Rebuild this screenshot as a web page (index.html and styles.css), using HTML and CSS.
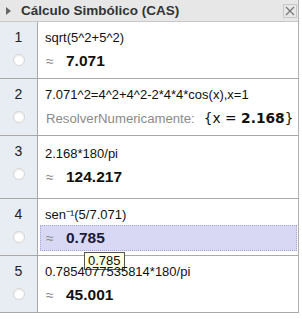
FILE: index.html
```html
<!DOCTYPE html>
<html lang="es">
<head>
<meta charset="UTF-8">
<title>Cálculo Simbólico (CAS)</title>
<link rel="stylesheet" href="styles.css">
</head>
<body>

<div class="panel">
    <!-- Barra de título -->
    <div class="titulo">
        <span class="flecha"></span>
        <span class="texto-titulo">Cálculo Simbólico (CAS)</span>
        <span class="cerrar">
            <svg width="14" height="14" viewBox="0 0 14 14">
                <rect x="0.5" y="0.5" width="13" height="13" fill="none" stroke="#c8c8c8"/>
                <path d="M3 3 L11 11 M11 3 L3 11" stroke="#777" stroke-width="1.2"/>
            </svg>
        </span>
    </div>

    <!-- Filas -->
    <div class="fila">
        <div class="numero"><span>1</span><span class="punto"></span></div>
        <div class="celda">
            <div class="entrada">sqrt(5^2+5^2)</div>
            <div class="salida"><span class="aprox">≈</span><b>7.071</b></div>
        </div>
    </div>

    <div class="fila">
        <div class="numero"><span>2</span><span class="punto"></span></div>
        <div class="celda">
            <div class="entrada">7.071^2=4^2+4^2-2*4*4*cos(x),x=1</div>
            <div class="salida">
                <span class="comando">ResolverNumericamente:</span>
                <span class="solucion">{x = <b>2.168</b>}</span>
            </div>
        </div>
    </div>

    <div class="fila alta">
        <div class="numero"><span>3</span><span class="punto"></span></div>
        <div class="celda">
            <div class="entrada">2.168*180/pi</div>
            <div class="salida"><span class="aprox">≈</span><b>124.217</b></div>
        </div>
    </div>

    <div class="fila">
        <div class="numero"><span>4</span><span class="punto"></span></div>
        <div class="celda">
            <div class="entrada">sen⁻¹(5/7.071)</div>
            <div class="salida marcada"><span class="aprox">≈</span><b>0.785</b></div>
            <div class="tooltip">0.785</div>
        </div>
    </div>

    <div class="fila">
        <div class="numero"><span>5</span><span class="punto"></span></div>
        <div class="celda">
            <div class="entrada">0.7854077535814*180/pi</div>
            <div class="salida"><span class="aprox">≈</span><b>45.001</b></div>
        </div>
    </div>
</div>

</body>
</html>
```

FILE: styles.css
```css
body {
    margin: 0;
    padding: 0;
    background: #fff;
    font-family: "Liberation Sans", Arial, sans-serif;
}

.panel {
    width: 298px;
    border-right: 1px solid #b0b0b0;
}

.titulo {
    height: 21px;
    display: flex;
    align-items: center;
    background-color: #e7e7e7;
    border-bottom: 1px solid #c8c8c8;
}

.flecha {
    width: 0;
    height: 0;
    margin: 0 10px 0 6px;
    border-top: 4px solid transparent;
    border-bottom: 4px solid transparent;
    border-left: 5px solid #666;
}

.texto-titulo {
    flex: 1;
    font-size: 13.5px;
    font-weight: bold;
    color: #333;
}

.cerrar {
    display: flex;
    margin-right: 1px;
}

.fila {
    display: flex;
    height: 56px;
    border-bottom: 1px solid #a8a8a8;
}

.fila.alta {
    height: 62px;
}

.numero {
    width: 37px;
    flex-shrink: 0;
    display: flex;
    flex-direction: column;
    align-items: center;
    padding-top: 7px;
    gap: 9px;
    background-color: #e8ecf3;
    border-right: 1px solid #a8a8a8;
    font-size: 14px;
    color: #222;
}

.punto {
    width: 10px;
    height: 10px;
    border-radius: 50%;
    background: #fff;
    border: 1px solid #d4d4d4;
    box-shadow: inset 0 1px 2px rgba(0, 0, 0, 0.08);
}

.celda {
    flex: 1;
    position: relative;
    padding: 6px 0 0 1px;
}

.alta .celda {
    padding-top: 8px;
}

.entrada {
    height: 20px;
    line-height: 20px;
    padding-left: 6px;
    font-size: 13px;
    color: #111;
    white-space: nowrap;
}

.salida {
    height: 26px;
    display: flex;
    align-items: center;
    padding-left: 7px;
    font-size: 13px;
    color: #111;
    white-space: nowrap;
}

.salida b {
    font-size: 15.5px;
}

.aprox {
    color: #888;
    width: 20px;
    font-size: 14px;
}

.marcada {
    margin-left: 1px;
    margin-right: 1px;
    padding-left: 6px;
    background-color: #d8d8f5;
    outline: 1px dotted #a8a8d8;
    outline-offset: -1px;
}

.marcada b {
    color: #1a1a3a;
}

.comando {
    color: #8a8a8a;
    font-size: 13.2px;
}

.solucion {
    margin-left: 9px;
    font-family: "DejaVu Sans", sans-serif;
    font-size: 13.8px;
}

.solucion b {
    font-size: 13.8px;
}

.tooltip {
    position: absolute;
    left: 46px;
    top: 53px;
    padding: 0 3px;
    height: 16px;
    line-height: 16px;
    font-size: 13px;
    background-color: #ffffe1;
    border: 1px solid #555;
    color: #111;
}
```
